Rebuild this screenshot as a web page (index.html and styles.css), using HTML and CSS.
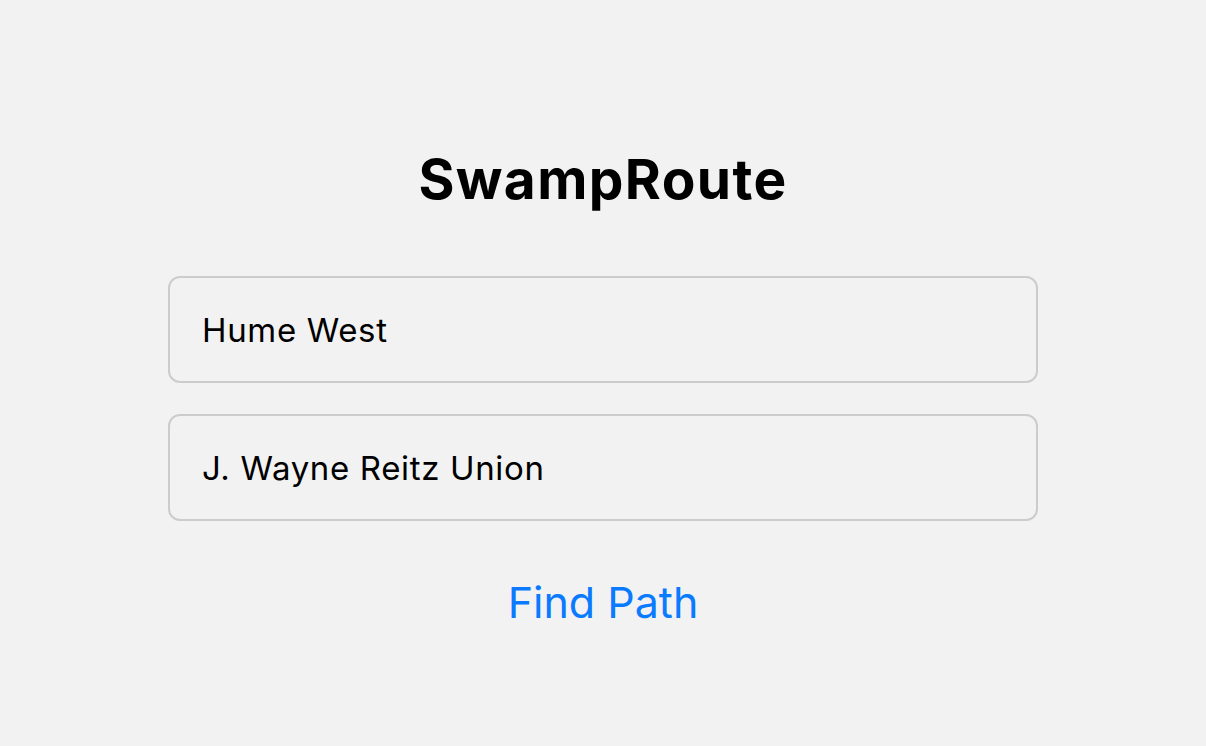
FILE: index.html
```html
<!DOCTYPE html>
<html>
<head>
<meta charset="utf-8">
<link rel="stylesheet" href="styles.css">
</head>
<body>
<main class="app">
  <h1 class="title">SwampRoute</h1>
  <div class="field">Hume West</div>
  <div class="field">J. Wayne Reitz Union</div>
  <button class="find">Find Path</button>
</main>
</body>
</html>
```
FILE: styles.css
```css
html, body {
  margin: 0;
  padding: 0;
  background: #f2f2f2;
  font-family: Inter, "Noto Sans", sans-serif;
  color: #000;
}
.app {
  width: 870px;
  margin: 0 auto;
  padding-top: 148px;
  display: flex;
  flex-direction: column;
  align-items: stretch;
}
.title {
  margin: 0 0 65px;
  text-align: center;
  font-size: 55px;
  font-weight: 700;
  line-height: 63px;
  letter-spacing: 1.4px;
}
.field {
  box-sizing: border-box;
  height: 107px;
  border: 2.5px solid #cccccc;
  border-radius: 12px;
  padding: 0 32px;
  display: flex;
  align-items: center;
  font-size: 33px;
  letter-spacing: 0.65px;
  margin-bottom: 31px;
}
.find {
  align-self: center;
  margin-top: 22px;
  background: none;
  border: none;
  padding: 0;
  font-family: inherit;
  font-size: 43px;
  line-height: 56px;
  color: #0a7aff;
}
```
